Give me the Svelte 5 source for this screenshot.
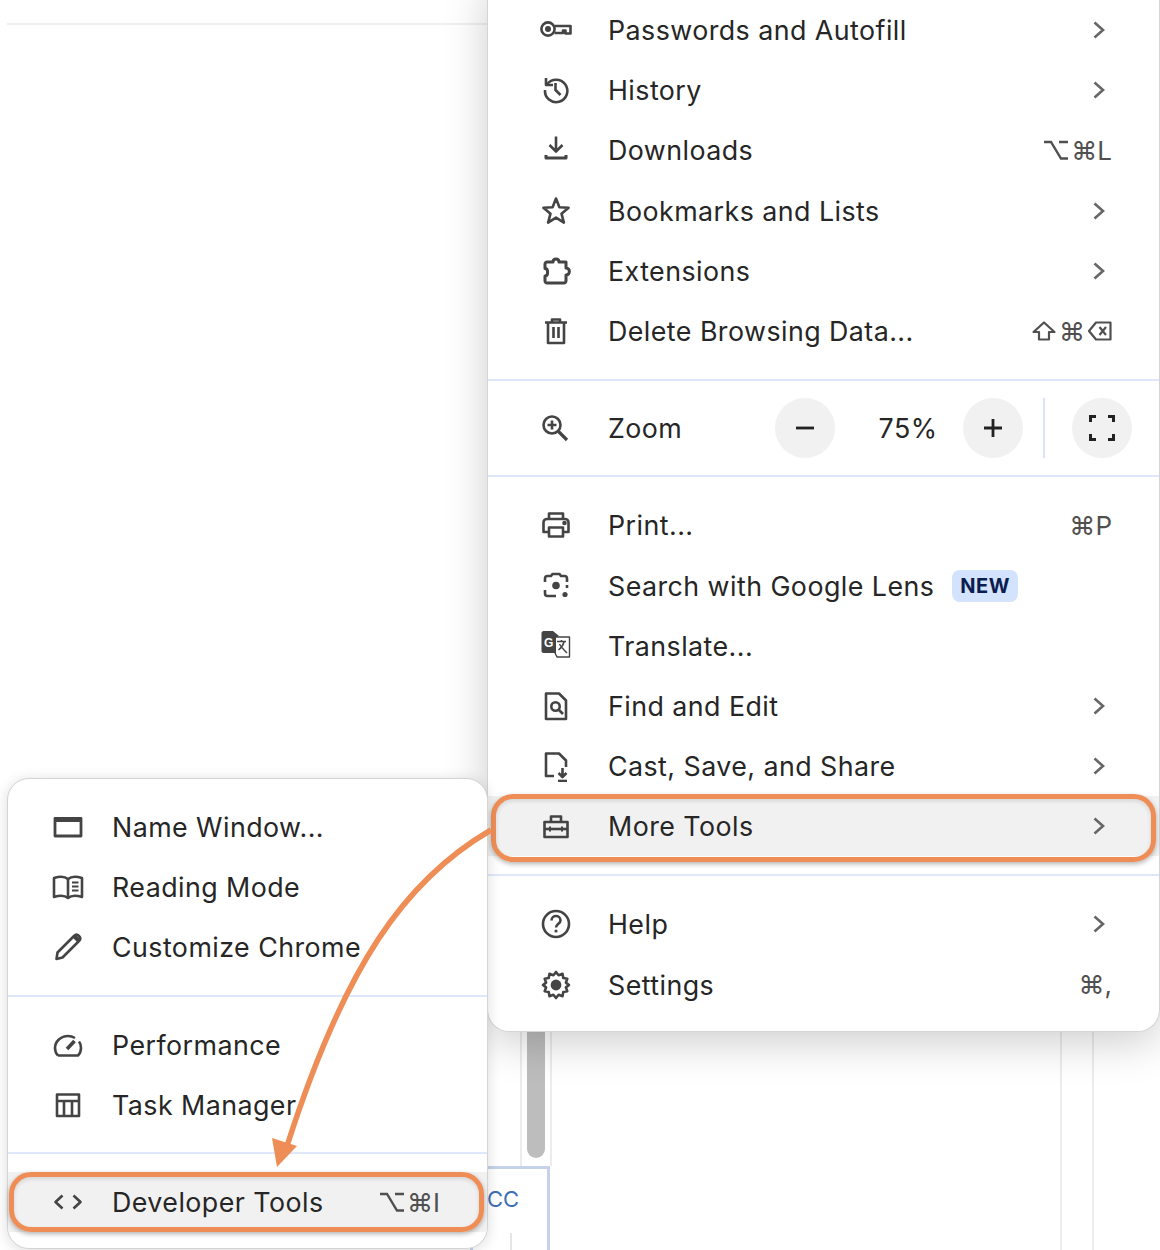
<script>
  const icons = {
    key: '<circle cx="8" cy="15" r="6.6"/><circle cx="8" cy="15" r="3" fill="currentColor" stroke="none"/><path d="M14.5 12H30.5V19.5H25.5V16.5H23V19H14.5"/>',
    history: '<path d="M6 4V11H13"/><path d="M7 10.5A11.2 11.2 0 1 1 5 16"/><path d="M15.5 9V16L20.5 21"/>',
    download: '<path d="M16 2.5V17M9.5 11L16 17.5L22.5 11"/><path d="M6 21V24H26V21" stroke-width="3"/>',
    star: '<path d="M16 3.5L19.4 12.3L28.6 12.8L21.5 18.7L23.9 27.6L16 22.6L8.1 27.6L10.5 18.7L3.4 12.8L12.6 12.3Z"/>',
    ext: '<path d="M7 7H13C13 3 19 3 19 7H26V13C30.5 13 30.5 20 26 20V26C26 27 25 28 24 28H7C6 28 5 27 5 26V21C8.5 21 8.5 13.5 5 13.5V9C5 8 6 7 7 7Z" stroke-width="3"/>',
    trash: '<path d="M5 7.5H27M12 7.5V4.5H20V7.5"/><path d="M8 7.5V28H24V7.5"/><path d="M13.5 12V23M18.5 12V23"/>',
    zoom: '<circle cx="12" cy="13" r="8.5"/><path d="M18.5 19.5L27 28" stroke-width="3.2"/><path d="M12 8.5V17.5M7.5 13H16.5"/>',
    print: '<path d="M9 10V4.5H23V10"/><path d="M9 23H3.5V13.5C3.5 11.5 5 10 7 10H25C27 10 28.5 11.5 28.5 13.5V23H23"/><path d="M9 18.5H23V27.5H9Z"/><circle cx="24.5" cy="14" r="1" fill="currentColor"/>',
    lens: '<path d="M5 12V8.5C5 7 6 6 7.5 6H11L12.5 4H19.5L21 6H24.5C26 6 27 7 27 8.5V12"/><path d="M5 20V23.5C5 25 6 26 7.5 26H16"/><circle cx="16" cy="15.5" r="3.8" fill="currentColor" stroke="none"/><circle cx="25" cy="24.5" r="2.6" fill="currentColor" stroke="none"/><path d="M27 15V18"/>',
    translate: '<path d="M1.5 3C1.5 2 2.5 1 3.5 1H13L19 6H18V23H3.5C2.5 23 1.5 22 1.5 21Z" fill="#444" stroke="none"/><path d="M16 7H29.5V27H17L15 23H16" fill="#fff" stroke-width="1.4"/><text x="4" y="17" font-size="12" font-weight="700" font-family="Liberation Sans" fill="#fff" stroke="none">G</text><path d="M17 11.5H26M21.5 10V12M24 12C23 16 21 18 18.5 20M19.5 14C21 17 24 20 27 23" stroke-width="1.5"/>',
    find: '<path d="M6 3.5H19L26 10.5V29H6Z"/><circle cx="15.5" cy="16.5" r="4.2"/><path d="M18.5 19.5L23 24"/>',
    cast: '<path d="M14 26H6V3.5H19L26 10.5V17"/><path d="M22.5 18V27M18.5 23L22.5 27L26.5 23"/><path d="M18 31H27"/>',
    tools: '<path d="M4.5 12H27.5V27H4.5Z"/><path d="M11 12V6.5H21V12"/><path d="M4.5 19H27.5"/><path d="M10 16.5V21.5M22 16.5V21.5" stroke-width="2"/>',
    help: '<circle cx="16" cy="16" r="13"/><path d="M11.5 12.5C11.5 6.5 20.5 6.5 20.5 12.5C20.5 15.5 16 16 16 19.5"/><circle cx="16" cy="23" r="1.6" fill="currentColor" stroke="none"/>',
    gear: '<path d="M16 3L18.6 6.2L22.5 4.8L23.3 8.9L27.3 9.7L25.9 13.6L29 16L25.9 18.4L27.3 22.3L23.3 23.1L22.5 27.2L18.6 25.8L16 29L13.4 25.8L9.5 27.2L8.7 23.1L4.7 22.3L6.1 18.4L3 16L6.1 13.6L4.7 9.7L8.7 8.9L9.5 4.8L13.4 6.2Z"/><circle cx="16" cy="16" r="5.4" fill="currentColor" stroke="none"/>',
    window: '<path d="M3 7.5H29V25H3Z" stroke-width="2.8"/><path d="M3 6.5H29V11H3Z" fill="currentColor" stroke="none"/>',
    book: '<path d="M16 8C13 5.5 7 5.5 2 7V26C7 24.5 13 24.5 16 27C19 24.5 25 24.5 30 26V7C25 5.5 19 5.5 16 8Z"/><path d="M16 8V27"/><path d="M20 11.5H26.5M20 15.5H26.5M20 19.5H26.5" stroke-width="2"/>',
    pencil: '<path d="M4.5 28L5.5 21.5L22 5C23.5 3.5 25.5 3.5 27 5C28.5 6.5 28.5 8.5 27 10L10.5 26.5Z"/><path d="M22 5L27 10" stroke-width="4"/>',
    gauge: '<path d="M6 26.5C3.5 24 3 21.5 3 19C3 12.5 9 7 16 7C19 7 21 7.8 23 9"/><path d="M27 12.5C28.5 14.5 29 16.5 29 19C29 21.5 28.5 24 26 26.5H6"/><path d="M15 20L22.5 12" stroke-width="3.6"/>',
    table: '<path d="M5 5.5H27V27H5Z" stroke-width="2.6"/><path d="M5 12H27M12 12V27M20 12V27"/>',
    code: '<path d="M10.5 9.5L3.5 16L10.5 22.5M21.5 9.5L28.5 16L21.5 22.5"/>'
  };

  const mainGroups = [
    [
      { icon: 'key', label: 'Passwords and Autofill', more: true },
      { icon: 'history', label: 'History', more: true },
      { icon: 'download', label: 'Downloads', opt: true, keys: '⌘L' },
      { icon: 'star', label: 'Bookmarks and Lists', more: true },
      { icon: 'ext', label: 'Extensions', more: true },
      { icon: 'trash', label: 'Delete Browsing Data...', shift: true, keys: '⌘', del: true }
    ],
    'zoom',
    [
      { icon: 'print', label: 'Print...', keys: '⌘P' },
      { icon: 'lens', label: 'Search with Google Lens', badge: 'NEW' },
      { icon: 'translate', label: 'Translate...' },
      { icon: 'find', label: 'Find and Edit', more: true },
      { icon: 'cast', label: 'Cast, Save, and Share', more: true },
      { icon: 'tools', label: 'More Tools', more: true, picked: true }
    ],
    [
      { icon: 'help', label: 'Help', more: true },
      { icon: 'gear', label: 'Settings', keys: '⌘,' }
    ]
  ];

  const subGroups = [
    [
      { icon: 'window', label: 'Name Window...' },
      { icon: 'book', label: 'Reading Mode' },
      { icon: 'pencil', label: 'Customize Chrome' }
    ],
    [
      { icon: 'gauge', label: 'Performance' },
      { icon: 'table', label: 'Task Manager' }
    ],
    [{ icon: 'code', label: 'Developer Tools', opt: true, keys: '⌘I', picked: true }]
  ];
</script>

{#snippet row(item)}
  <div class="row" class:picked={item.picked}>
    <svg class="icon" viewBox="0 0 32 32" width="32" height="32" fill="none" stroke="currentColor" stroke-width="2.6" stroke-linejoin="round">
      {@html icons[item.icon]}
    </svg>
    <span class="label">{item.label}</span>
    {#if item.badge}<span class="badge">{item.badge}</span>{/if}
    {#if item.keys}
      <span class="keys">
        {#if item.opt}
          <svg viewBox="0 0 24 20" width="24" height="20" fill="none" stroke="currentColor" stroke-width="2.4"><path d="M0 2H7L17 18.5H24M15 2H24" /></svg>
        {/if}
        {#if item.shift}
          <svg viewBox="0 0 24 20" width="24" height="20" fill="none" stroke="currentColor" stroke-width="2.2" stroke-linejoin="round"><path d="M12 1.5L22.5 11H17V18.5H7V11H1.5Z" /></svg>
        {/if}
        <span>{item.keys}</span>
        {#if item.del}
          <svg viewBox="0 0 24 20" width="24" height="20" fill="none" stroke="currentColor" stroke-width="2.2" stroke-linejoin="round"><path d="M8 1.5H22.5V18.5H8L1 10Z" /><path d="M11.5 6L18 14M18 6L11.5 14" /></svg>
        {/if}
      </span>
    {/if}
    {#if item.more}
      <svg class="chevron" viewBox="0 0 12 18" width="12" height="18" fill="none" stroke="currentColor" stroke-width="2.6"><path d="M1.5 1.5L10 9L1.5 16.5" /></svg>
    {/if}
    {#if item.picked}<span class="ring"></span>{/if}
  </div>
{/snippet}

<div class="page">
  <div class="topline"></div>
  <div class="gutter gutter-a"></div>
  <div class="gutter gutter-b"></div>
  <div class="gutter gutter-c"></div>
  <div class="gutter gutter-d"></div>
  <div class="thumb"></div>
  <div class="cc">CC</div>

  <div class="menu main">
    {#each mainGroups as group}
      {#if group === 'zoom'}
        <div class="group zoom-group">
          <div class="row zoom-row">
            <svg class="icon" viewBox="0 0 32 32" width="32" height="32" fill="none" stroke="currentColor" stroke-width="2.6">
              {@html icons.zoom}
            </svg>
            <span class="label">Zoom</span>
            <div class="zoom-controls">
              <span class="round"><svg viewBox="0 0 20 20" width="20" height="20" stroke="currentColor" stroke-width="2.8"><path d="M1 10H19" /></svg></span>
              <span class="percent">75%</span>
              <span class="round"><svg viewBox="0 0 20 20" width="20" height="20" stroke="currentColor" stroke-width="2.8"><path d="M1 10H19M10 1V19" /></svg></span>
              <span class="vdivider"></span>
              <span class="round"><svg viewBox="0 0 26 26" width="26" height="26" fill="none" stroke="currentColor" stroke-width="3"><path d="M1.5 7V1.5H7M19 1.5H24.5V7M24.5 19V24.5H19M7 24.5H1.5V19" /></svg></span>
            </div>
          </div>
        </div>
      {:else}
        <div class="group">
          {#each group as item}
            {@render row(item)}
          {/each}
        </div>
      {/if}
    {/each}
  </div>

  <div class="menu sub">
    {#each subGroups as group}
      <div class="group">
        {#each group as item}
          {@render row(item)}
        {/each}
      </div>
    {/each}
  </div>

  <svg class="arrow" viewBox="0 0 1160 1250" width="1160" height="1250" fill="none">
    <path d="M491 830C405 880 345 965 287 1146" stroke="#ee8e56" stroke-width="5.5" />
    <path d="M272 1138L297 1146L277 1167Z" fill="#ee8e56" />
  </svg>
</div>

<style>
  :global(body) {
    background: #fff;
  }

  .page {
    position: relative;
    width: 1160px;
    height: 1250px;
    overflow: hidden;
    font-family: Inter, "Liberation Sans", sans-serif;
    color: #262626;
  }

  .topline {
    position: absolute;
    left: 7px;
    top: 23px;
    width: 480px;
    height: 2px;
    background: #f0f0f0;
  }

  .gutter {
    position: absolute;
    top: 1000px;
    bottom: 84px;
    width: 2px;
    background: #ececec;
  }
  .gutter-a { left: 520px; }
  .gutter-b { left: 550px; }
  .gutter-c { left: 1060px; bottom: 0; }
  .gutter-d { left: 1092px; bottom: 0; }

  .thumb {
    position: absolute;
    left: 527px;
    top: 1000px;
    width: 18px;
    height: 158px;
    border-radius: 9px;
    background: #bdbdbd;
  }

  .cc {
    position: absolute;
    left: 470px;
    top: 1166px;
    width: 80px;
    height: 100px;
    box-sizing: border-box;
    padding: 17px 0 0 14px;
    border: 3px solid #c4d3e9;
    font-size: 22px;
    color: #3f6fb5;
  }

  .cc::after {
    content: "";
    position: absolute;
    left: 37px;
    top: 64px;
    width: 2px;
    height: 30px;
    background: #e6e6e6;
  }

  .menu {
    position: absolute;
    box-sizing: border-box;
    background: #fff;
    border: 1px solid #d4d4d4;
  }

  .main {
    left: 487px;
    top: -20px;
    width: 673px;
    height: 1052px;
    padding-top: 20px;
    border-radius: 0 0 22px 22px;
    border-top: 0;
    box-shadow: 0 10px 44px rgba(0, 0, 0, 0.2);
    --icon-left: 52px;
    --label-gap: 36px;
  }

  .sub {
    left: 7px;
    top: 778px;
    width: 481px;
    height: 471px;
    padding-top: 18px;
    border-radius: 22px;
    box-shadow: 0 2px 14px rgba(0, 0, 0, 0.14);
    --icon-left: 44px;
    --label-gap: 28px;
  }

  .group {
    padding-bottom: 18px;
    margin-bottom: 17px;
    border-bottom: 2px solid #dfe7fa;
  }
  .group:last-child {
    border-bottom: 0;
    margin-bottom: 0;
    padding-bottom: 0;
  }
  .main .group:last-child .row {
    height: 61px;
  }
  .sub .group {
    padding-bottom: 17px;
    margin-bottom: 18px;
  }
  .sub .group:last-child {
    margin-bottom: 0;
    padding-bottom: 0;
  }

  .zoom-group {
    padding-bottom: 17px;
    margin-bottom: 18px;
  }

  .row {
    position: relative;
    display: flex;
    align-items: center;
    height: 60.2px;
    padding: 0 47px 0 var(--icon-left);
    font-size: 26.8px;
    letter-spacing: 0.45px;
  }

  .row.picked {
    background: #f1f1f1;
  }

  .icon {
    flex: none;
    margin-right: var(--label-gap);
    color: #444;
  }

  .label {
    white-space: nowrap;
  }

  .badge {
    margin-left: 18px;
    padding: 4px 8px;
    border-radius: 8px;
    background: #d3e3fd;
    color: #0b1c50;
    font-size: 20px;
    font-weight: 700;
    letter-spacing: 0.5px;
  }

  .keys {
    margin-left: auto;
    display: flex;
    align-items: center;
    gap: 3px;
    font-family: Inter, "DejaVu Sans", sans-serif;
    font-size: 26px;
    letter-spacing: 0;
    color: #505050;
    white-space: nowrap;
  }

  .chevron {
    margin-left: auto;
    margin-right: 7px;
    color: #666;
  }

  .ring {
    position: absolute;
    inset: -2px 3px -6px 3px;
    border: 5px solid #ee8e56;
    border-radius: 22px;
    box-shadow: 0 2px 5px rgba(0, 0, 0, 0.3), inset 0 2px 4px rgba(0, 0, 0, 0.12);
  }
  .sub .ring {
    inset: 0 3px 0 1px;
  }

  .zoom-row {
    padding-right: 27px;
  }

  .zoom-controls {
    margin-left: auto;
    display: flex;
    align-items: center;
  }

  .round {
    display: flex;
    align-items: center;
    justify-content: center;
    width: 60px;
    height: 60px;
    border-radius: 50%;
    background: #f1f1f1;
    color: #222;
  }

  .percent {
    box-sizing: border-box;
    width: 128px;
    padding-left: 18px;
    text-align: center;
  }

  .vdivider {
    width: 2px;
    height: 60px;
    margin: 0 27px 0 20px;
    background: #d9e4f9;
  }

  .arrow {
    position: absolute;
    left: 0;
    top: 0;
    pointer-events: none;
  }
</style>
